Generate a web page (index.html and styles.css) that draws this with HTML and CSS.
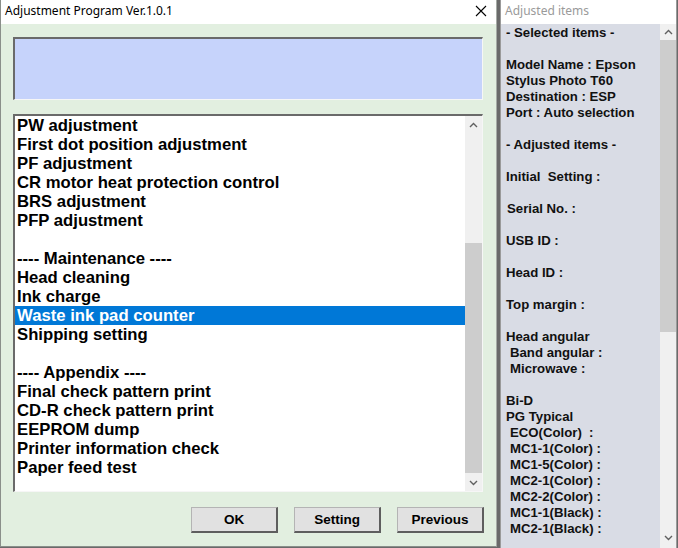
FILE: index.html
```html
<!DOCTYPE html>
<html lang="en">
<head>
    <meta charset="UTF-8">
    <meta name="viewport" content="width=device-width, initial-scale=1.0">
    <title>Adjustment Program Ver.1.0.1</title>
    <link rel="stylesheet" href="styles.css">
</head>
<body>
    <div class="desktop">
        <div class="window main-window">
            <div class="titlebar">
                <span class="title">Adjustment Program Ver.1.0.1</span>
                <span class="close">
                    <svg width="12" height="12" viewBox="0 0 12 12"><path d="M1 1 L11 11 M11 1 L1 11" stroke="#000" stroke-width="1.1" fill="none"/></svg>
                </span>
            </div>
            <div class="client">
                <div class="status-box"></div>
                <div class="listbox">
                    <ul class="items">
                        <li>PW adjustment</li>
                        <li>First dot position adjustment</li>
                        <li>PF adjustment</li>
                        <li>CR motor heat protection control</li>
                        <li>BRS adjustment</li>
                        <li>PFP adjustment</li>
                        <li>&nbsp;</li>
                        <li>---- Maintenance ----</li>
                        <li>Head cleaning</li>
                        <li>Ink charge</li>
                        <li class="selected">Waste ink pad counter</li>
                        <li>Shipping setting</li>
                        <li>&nbsp;</li>
                        <li>---- Appendix ----</li>
                        <li>Final check pattern print</li>
                        <li>CD-R check pattern print</li>
                        <li>EEPROM dump</li>
                        <li>Printer information check</li>
                        <li>Paper feed test</li>
                    </ul>
                    <div class="vscroll list-scroll">
                        <div class="arrow"><svg width="9" height="6" viewBox="0 0 9 6"><polyline points="1,5 4.5,1.5 8,5" stroke="#606060" stroke-width="1.4" fill="none"/></svg></div>
                        <div class="track"><div class="thumb"></div></div>
                        <div class="arrow"><svg width="9" height="6" viewBox="0 0 9 6"><polyline points="1,1 4.5,4.5 8,1" stroke="#606060" stroke-width="1.4" fill="none"/></svg></div>
                    </div>
                </div>
                <div class="buttons">
                    <button class="btn">OK</button>
                    <button class="btn">Setting</button>
                    <button class="btn">Previous</button>
                </div>
            </div>
        </div>

        <div class="window side-window">
            <div class="titlebar">
                <span class="title dim">Adjusted items</span>
            </div>
            <div class="side-client">
                <div class="report">
                    <div>- Selected items -</div>
                    <div>&nbsp;</div>
                    <div>Model Name : Epson</div>
                    <div>Stylus Photo T60</div>
                    <div>Destination : ESP</div>
                    <div>Port : Auto selection</div>
                    <div>&nbsp;</div>
                    <div>- Adjusted items -</div>
                    <div>&nbsp;</div>
                    <div>Initial&nbsp; Setting :</div>
                    <div>&nbsp;</div>
                    <div class="in1">Serial No. :</div>
                    <div>&nbsp;</div>
                    <div>USB ID :</div>
                    <div>&nbsp;</div>
                    <div>Head ID :</div>
                    <div>&nbsp;</div>
                    <div>Top margin :</div>
                    <div>&nbsp;</div>
                    <div>Head angular</div>
                    <div class="in2">Band angular :</div>
                    <div class="in2">Microwave :</div>
                    <div>&nbsp;</div>
                    <div>Bi-D</div>
                    <div>PG Typical</div>
                    <div class="in2">ECO(Color)&nbsp; :</div>
                    <div class="in2">MC1-1(Color) :</div>
                    <div class="in2">MC1-5(Color) :</div>
                    <div class="in2">MC2-1(Color) :</div>
                    <div class="in2">MC2-2(Color) :</div>
                    <div class="in2">MC1-1(Black) :</div>
                    <div class="in2">MC2-1(Black) :</div>
                </div>
                <div class="vscroll side-scroll">
                    <div class="arrow"><svg width="9" height="6" viewBox="0 0 9 6"><polyline points="1,5 4.5,1.5 8,5" stroke="#606060" stroke-width="1.4" fill="none"/></svg></div>
                    <div class="track"><div class="thumb"></div></div>
                    <div class="arrow"><svg width="9" height="6" viewBox="0 0 9 6"><polyline points="1,1 4.5,4.5 8,1" stroke="#606060" stroke-width="1.4" fill="none"/></svg></div>
                </div>
            </div>
        </div>
    </div>
</body>
</html>
```

FILE: styles.css
```css
body {
    margin: 0;
    font-family: "Liberation Sans", Arial, sans-serif;
}

.desktop {
    display: flex;
    width: 678px;
    height: 548px;
    overflow: hidden;
    background: #6a6a6a;
}

.window {
    display: flex;
    flex-direction: column;
    background: #fff;
}

.titlebar {
    display: flex;
    align-items: center;
    justify-content: space-between;
    height: 24px;
    background: #fff;
    flex-shrink: 0;
}

.title {
    font-family: "Noto Sans", "Open Sans", sans-serif;
    font-size: 12px;
    color: #000;
    padding-left: 4px;
    padding-bottom: 3px;
}

.title.dim {
    color: #9a9a9a;
}

.close {
    display: flex;
    margin-right: 9px;
    margin-bottom: 2px;
}

/* main window */

.main-window {
    width: 497px;
    height: 547px;
    box-sizing: border-box;
    border-left: 1px solid #8a8f8a;
    border-right: 1px solid #a6aba6;
    border-bottom: 1px solid #8a8f8a;
}

.client {
    flex: 1;
    background: #e2efe0;
    padding: 13px 13px 0 12px;
}

.status-box {
    height: 63px;
    box-sizing: border-box;
    background: #c6d3fb;
    border-top: 2px solid #6a6a6a;
    border-left: 2px solid #6a6a6a;
    border-right: 1px solid #f6f6f6;
    border-bottom: 1px solid #f6f6f6;
}

.listbox {
    display: flex;
    margin-top: 14px;
    height: 378px;
    box-sizing: border-box;
    background: #fff;
    border-top: 2px solid #6a6a6a;
    border-left: 2px solid #6a6a6a;
    border-right: 1px solid #f6f6f6;
    border-bottom: 1px solid #f6f6f6;
}

.items {
    flex: 1;
    list-style: none;
    margin: 0;
    padding: 0;
    font-size: 16.7px;
    font-weight: bold;
    line-height: 19px;
    color: #000;
    white-space: nowrap;
}

.items li {
    padding-left: 2px;
}

.items .selected {
    background: #0078d7;
    color: #fff;
}

.vscroll {
    display: flex;
    flex-direction: column;
    width: 17px;
    background: #f0f0f0;
}

.vscroll .arrow {
    display: flex;
    align-items: center;
    justify-content: center;
    height: 17px;
}

.vscroll .track {
    flex: 1;
    display: flex;
    flex-direction: column;
}

.vscroll .thumb {
    background: #cdcdcd;
}

.list-scroll .thumb {
    margin: 110px 0 0 0;
    height: 230px;
}

.buttons {
    display: flex;
    justify-content: flex-end;
    gap: 16px;
    margin-top: 15px;
    margin-right: -1px;
}

.btn {
    width: 87px;
    height: 26px;
    background: #e1e1e1;
    border-top: 1px solid #b4b4b4;
    border-left: 1px solid #b4b4b4;
    border-right: 2px solid #5e5e5e;
    border-bottom: 2px solid #5e5e5e;
    font-family: "Liberation Sans", Arial, sans-serif;
    font-size: 13.5px;
    font-weight: bold;
    color: #000;
    padding: 0;
}

/* side window */

.side-window {
    margin-left: 3px;
    width: 177px;
    box-sizing: border-box;
    border-left: 1px solid #9a9a9a;
    border-right: 1px solid #9a9a9a;
}

.side-client {
    flex: 1;
    display: flex;
    background: #d9dce5;
}

.report {
    flex: 1;
    padding: 1px 0 0 5px;
    font-size: 13.2px;
    font-weight: bold;
    line-height: 16px;
    color: #111;
    white-space: nowrap;
    overflow: hidden;
}

.report .in1 {
    padding-left: 1px;
}

.report .in2 {
    padding-left: 4px;
}

.side-scroll {
    width: 16px;
}

.side-scroll .arrow {
    height: 16px;
}

.side-scroll .thumb {
    height: 292px;
}

.side-scroll .arrow:last-child {
    margin-bottom: 2px;
}
```
